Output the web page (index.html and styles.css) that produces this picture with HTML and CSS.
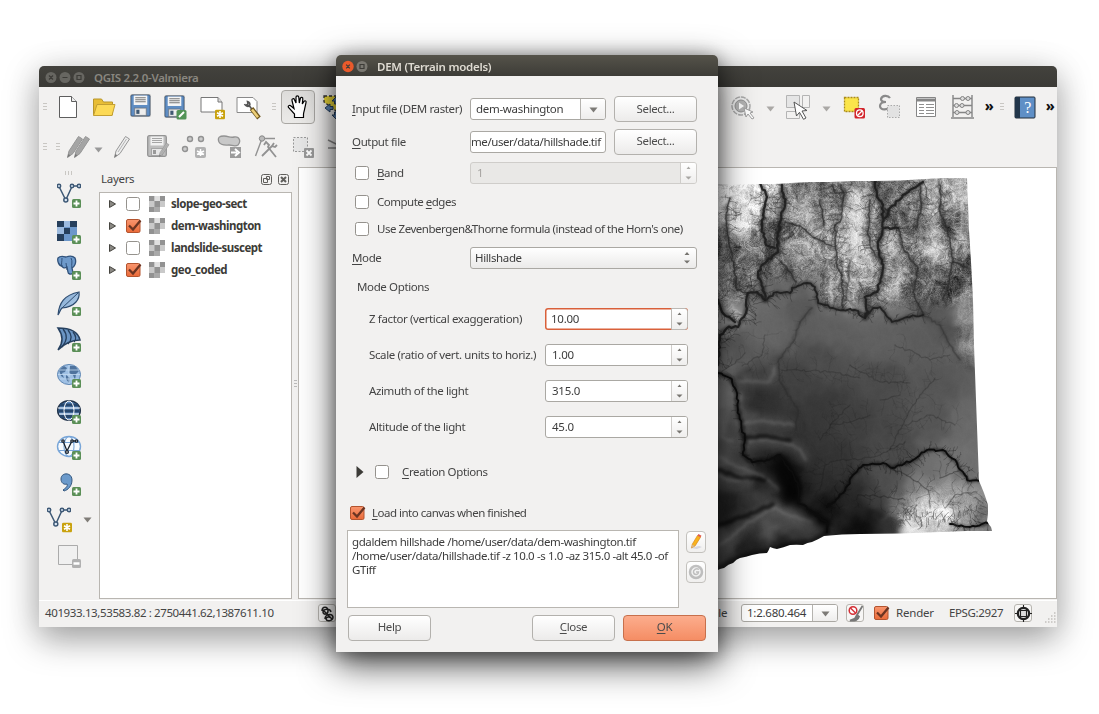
FILE: index.html
```html
<!DOCTYPE html>
<html lang="en">
<head>
<meta charset="utf-8">
<title>QGIS 2.2.0-Valmiera</title>
<link rel="stylesheet" href="styles.css">
</head>
<body>
<svg class="sprite" width="0" height="0">
  <defs>
    <linearGradient id="orange" x1="0" y1="0" x2="0" y2="1"><stop offset="0" stop-color="#f9966f"/><stop offset="1" stop-color="#ea6a38"/></linearGradient>
    <linearGradient id="leaf" x1="0" y1="0" x2="1" y2="1"><stop offset="0" stop-color="#7ea6d0"/><stop offset="1" stop-color="#b9d2ec"/></linearGradient>
    <symbol id="plus" viewBox="0 0 9 9"><rect width="9" height="9" rx="1.5" fill="#5b8f57"/><path d="M4.5 1.5v6M1.5 4.5h6" stroke="#fff" stroke-width="1.8"/></symbol>
    <symbol id="star" viewBox="0 0 10 10"><rect width="10" height="10" rx="1.5" fill="#c9a20f"/><path d="M5 1.5v7M2 3.2l6 3.6M8 3.2L2 6.800" stroke="#fff" stroke-width="1.6"/></symbol>
    <symbol id="check-off" viewBox="0 0 17 16"><rect x="1.500" y="1.500" width="13" height="13" rx="2" fill="#fff" stroke="#95928d"/></symbol>
    <symbol id="check-on" viewBox="0 0 17 16"><rect x="1.500" y="1.500" width="13.500" height="13" rx="1.500" fill="url(#orange)" stroke="#b3542f"/><path d="M4 7.500l4 4L15.500 2.500" fill="none" stroke="#6b3422" stroke-width="2.300"/></symbol>
    <symbol id="down" viewBox="0 0 9 6"><path d="M.5 .5h8L4.500 5.500z" fill="currentColor"/></symbol>
    <symbol id="raster" viewBox="0 0 16 16"><path fill="#c9c9c9" d="M0 0h16v16H0z"/><path fill="#929292" d="M0 0h5.500v5H0zM11 0h5v5h-5zM5.500 5H11v6H5.500zM0 11h5.500v5H0z"/><path fill="#fff" d="M11 11h5v5h-5z"/><path fill="#a9a9a9" d="M5.500 11H11v5H5.500z"/><path fill="#e0e0e0" d="M5.500 0H11v5H5.500z"/></symbol>
    <symbol id="vee" viewBox="0 0 24 20"><g fill="none" stroke="#3d5875" stroke-width="1.500"><path d="M2.500 4.500L8 15.500M9.500 15.500L14.500 4.500M17 3h4"/><circle cx="2" cy="3" r="1.700" fill="#dce8f5"/><circle cx="8.800" cy="17" r="2" fill="#dce8f5"/><circle cx="15" cy="3" r="1.700" fill="#dce8f5"/><circle cx="22" cy="3" r="1.700" fill="#dce8f5"/></g></symbol>
    <symbol id="floppy" viewBox="0 0 20 22"><rect x=".7" y=".7" width="18.600" height="20.600" rx="1.500" fill="currentColor" stroke="#00000055" stroke-width="1.300"/><rect x="3.500" y="1.500" width="13" height="9" fill="#f5f5f5"/><path d="M5 3.500h10M5 5.500h10M5 7.500h10" stroke="#777"/><rect x="4.500" y="13.500" width="11" height="7" fill="#eee" stroke="#6669"/><rect x="6" y="15" width="3" height="4" fill="#3f5872"/></symbol>
    <symbol id="floppy-off" viewBox="0 0 20 22"><rect x=".7" y=".7" width="18.600" height="20.600" rx="1.500" fill="#bdbdbd" stroke="#949494" stroke-width="1.300"/><rect x="3.500" y="1.500" width="13" height="9" fill="#f0f0f0"/><path d="M5 3.500h10M5 5.500h10M5 7.500h10" stroke="#a5a5a5"/><rect x="4.500" y="13.500" width="11" height="7" fill="#e6e6e6" stroke="#a5a5a5"/><rect x="6" y="15" width="3" height="4" fill="#999"/></symbol>
    <symbol id="pencil" viewBox="0 0 18 24"><path d="M1.500 22.500l1.500-6.500L12.500 1.500l4 2.500L7 18.500z" fill="currentColor" stroke="#969696"/><path d="M1.500 22.500l.8-3.500 2 1.300z" fill="#777"/><path d="M13.500 4L5 17" fill="none" stroke="#a3a3a3" stroke-width=".8"/></symbol>
  </defs>
</svg>

<main class="desktop">
<section class="window main-window">
  <header class="titlebar inactive">
    <svg width="42" height="13"><g fill="#676661"><circle cx="6" cy="6.500" r="5.500"/><circle cx="20" cy="6.500" r="5.500"/><circle cx="34" cy="6.500" r="5.500"/></g><path d="M4 4.500l4 4M8 4.500l-4 4M17.500 6.500h5M32 4.500h4v4h-4z" fill="none" stroke="#3d3c38" stroke-width="1.200"/></svg>
    <span class="title">QGIS 2.2.0-Valmiera</span>
  </header>

  <nav class="toolbar top">
    <i class="grip"></i>
    <b class="cell"><svg width="20" height="24"><path d="M1.500 1.500h12l5 5v16h-17z" fill="#fff" stroke="#5e5e5e"/><path d="M13.500 1.500v5h5" fill="#eee" stroke="#5e5e5e"/></svg></b>
    <b class="cell"><svg width="24" height="22"><path d="M1.500 19V3h8l2 3h9v13z" fill="#e8bd35" stroke="#b8962c"/><path d="M1.500 19.500L5 8.500h18L20 19.500z" fill="#fcd955" stroke="#c39f32"/></svg></b>
    <b class="cell blue up"><svg width="21" height="23"><use href="#floppy"/></svg></b>
    <b class="cell blue"><svg width="24" height="25"><use href="#floppy" width="21" height="23"/><rect x="12.500" y="15" width="10" height="9.500" rx="1.500" fill="#539457"/><path d="M15 22l5-5" stroke="#fff" stroke-width="2"/></svg></b>
    <b class="cell"><svg width="26" height="25"><path d="M2 2.500h17l4 4.500v10H2z" fill="#fff" stroke="#777"/><path d="M19 2.500v4.500h4" fill="#ddd" stroke="#777"/><use href="#star" x="16" y="14.500" width="10" height="10"/></svg></b>
    <b class="cell"><svg width="26" height="25"><path d="M2 2.500h16l4 4v11H2z" fill="#fff" stroke="#8a8a8a"/><path d="M9.500 9c1 2 3 3 5 2l3 4M14.500 11c1-2 0-4-2-4.500l.5 2.500-1.500 1z" fill="none" stroke="#555" stroke-width="1.600"/><path d="M16.500 13.500l7.500 9.500" stroke="#6d551c" stroke-width="4.500"/><path d="M17 14.500l6 7.700" stroke="#edcf78" stroke-width="2.600"/></svg></b>
    <i class="grip wide"></i>
    <b class="cell"><span class="pressed"><svg width="22" height="26"><path d="M7.500 23.500v-3.500L1.500 13.500c-1-1.500 1-3 2.500-1.500l3 2.500L5 6.500c-.5-2 2-2.500 2.500-.8L9 9V3.300c0-2 2.600-2 2.800 0l.5 5.700 1-4.500c.5-1.800 2.800-1.200 2.500.6L15.300 10l1.700-2.600c1-1.300 2.600-.4 2 1.200l-1.300 5.900c-.2 2-1.200 4-1.200 6v3z" fill="#fff" stroke="#000" stroke-width="1.200"/></svg></span></b>
    <b class="cell pan"><svg width="26" height="26"><path d="M1 2h24v12l-8 6L1 8z" fill="#f0dc3a" stroke="#333" stroke-width="1.300" stroke-dasharray="3 2"/><path d="M13 3l4 4h-2.500v3h-3V7H9zM13 25l-4-4h2.500v-3h3v3H17zM2 14l5-4v2.500h3v3H7V18zM24 14l-5-4v2.500h-3v3h3V18z" fill="#5c86b7" stroke="#26405f"/></svg></b>
    <span class="spacer"></span>
    <b class="cell"><svg width="26" height="26"><circle cx="12" cy="12" r="9" fill="#eee" stroke="#aaa" stroke-width="1.500" stroke-dasharray="5 1"/><circle cx="12" cy="12" r="6" fill="#b4b4b4" stroke="#909090"/><path d="M10 8.500l5 3.500-5 3.500z" fill="#fff"/><path d="M15 14l9 4-3 1 4 5-2 1-4-5-2 3z" fill="#fff" stroke="#a0a0a0"/></svg></b>
    <b class="drop"><svg width="9" height="6"><use href="#down"/></svg></b>
    <b class="cell"><svg width="26" height="26"><g fill="#e5e5e5" stroke="#b4b4b4"><path d="M1.500 1.500h13v12h-13z"/><path fill="#f2f1f0" d="M17.500 1.500h7v12h-7zM1.500 17.500h13v7h-13z"/></g><path d="M9 8l13 8.500-5 .5 4 7-2.500 1.300-4-7L11.500 22z" fill="#fff" stroke="#555"/></svg></b>
    <b class="drop"><svg width="9" height="6"><use href="#down"/></svg></b>
    <b class="cell"><svg width="24" height="24"><path d="M2.500 2.500h14v14h-14z" fill="#fbe54a" stroke="#ab8c18" stroke-width="1.300" stroke-dasharray="2 1"/><rect x="12.500" y="13" width="10.500" height="10.500" rx="1.500" fill="#d2232a"/><circle cx="17.800" cy="18.200" r="3.300" fill="none" stroke="#fff" stroke-width="1.300"/><path d="M15.500 20.500l4.500-4.500" stroke="#fff" stroke-width="1.300"/></svg></b>
    <b class="cell"><svg width="24" height="26"><path d="M12 4c-2-3-8-3-9 1 0 2 2 3 5 3-4 0-6 2-6 4 0 5 9 4 10 0" fill="none" stroke="#8a8a8a" stroke-width="2.200"/><path d="M9.500 11.500h12v12h-12z" fill="#e2e2e2" stroke="#aaa" stroke-dasharray="1.500 1.500"/></svg></b>
    <b class="cell"><svg width="22" height="22"><path d="M1.500 1.500h19v19h-19z" fill="#fff" stroke="#858585"/><path d="M2 4h18" stroke="#858585" stroke-width="3"/><path d="M4 8.500h5M4 11.500h5M4 14.500h5M4 17.500h5M11 8.500h8M11 11.500h8M11 14.500h8M11 17.500h8" stroke="#8f8f8f"/></svg></b>
    <b class="cell"><svg width="25" height="26"><path d="M3 1v22M22 1v22M3 4.500h19M3 11.500h19M3 18.500h19M1 24h23" fill="none" stroke="#858585" stroke-width="1.400"/><g fill="#ddd" stroke="#858585"><circle cx="12.500" cy="4.500" r="2"/><circle cx="18" cy="4.500" r="2"/><circle cx="6.500" cy="11.500" r="2"/><circle cx="12" cy="11.500" r="2"/><circle cx="7" cy="18.500" r="2"/><circle cx="18" cy="18.500" r="2"/></g></svg></b>
    <b class="more">»</b>
    <i class="grip narrow"></i>
    <b class="cell"><svg width="22" height="23"><rect x="1" y="1" width="20" height="21" rx="1" fill="#5f8fc6" stroke="#222c38"/><path d="M1 1h5v21H1z" fill="#22364a"/><text x="13.500" y="17" text-anchor="middle" class="help-mark">?</text></svg></b>
    <b class="more">»</b>
  </nav>

  <nav class="toolbar second">
    <i class="grip"></i><i class="grip mid"></i>
    <b class="cell pens"><svg width="26" height="26"><g color="#a5a5a5"><use href="#pencil" x="0" y="1" width="18" height="24"/><use href="#pencil" x="7" y="1" width="18" height="24"/></g></svg></b>
    <b class="drop small"><svg width="9" height="6"><use href="#down"/></svg></b>
    <b class="cell light"><svg width="18" height="24"><use href="#pencil"/></svg></b>
    <b class="cell mid-grey"><svg width="24" height="24"><use href="#floppy-off" x="1" y="0" width="20" height="22"/><use href="#pencil" x="12" y="7" width="12" height="16"/></svg></b>
    <b class="cell"><svg width="26" height="26"><g fill="#ccc" stroke="#929292" stroke-width="1.400"><circle cx="9" cy="5" r="2.500"/><circle cx="20" cy="5" r="2.500"/><circle cx="4" cy="15" r="2.500"/></g><rect x="14" y="13" width="11" height="11" rx="2" fill="#b2b2b2"/><path d="M19.500 15v7M16 17l7 3.500M23 17l-7 3.500" stroke="#fff" stroke-width="1.500"/></svg></b>
    <b class="cell"><svg width="26" height="26"><path d="M2 8c-2-5 1-6 5-6 5 0 6 2 10 1 6-1 7 5 4 8-3 2-6 0-9 0s-8 1-10-3z" fill="#c8c8c8" stroke="#929292" stroke-width="1.300"/><rect x="13" y="13" width="11" height="11" fill="#9c9c9c"/><path d="M14 18.500h6M18 15l4 3.500-4 3.500" fill="none" stroke="#fff" stroke-width="2"/></svg></b>
    <b class="cell"><svg width="26" height="26"><path d="M2.500 22L8.500 6M9 4.500h13" fill="none" stroke="#929292" stroke-width="1.400"/><path d="M9 22L20 11M11 11l2-3 3 3-1 2 8 10M21 9l-2 3 3 1 2-2" fill="none" stroke="#929292" stroke-width="1.800"/><circle cx="9" cy="4.500" r="2.700" fill="#bbb" stroke="#888"/></svg></b>
    <b class="cell"><svg width="25" height="26"><path d="M3.500 3.500h14v14h-14z" fill="#e6e6e6" stroke="#999" stroke-dasharray="2 1.500"/><rect x="14" y="14" width="10" height="10" rx="1" fill="#999"/><path d="M16.500 16.500l5 5M21.500 16.500l-5 5" stroke="#fff" stroke-width="1.800"/></svg></b>
    <b class="cell"><svg width="24" height="18"><path d="M2 2l10 5 10-5M2 10h8" fill="none" stroke="#888" stroke-width="1.500"/></svg></b>
  </nav>

  <div class="body">
    <nav class="side">
      <i class="grip-h"></i>
      <b class="cell"><svg width="26" height="26"><use href="#vee" x="1" y="0" width="24" height="20"/><use href="#plus" x="16" y="16" width="9" height="9"/></svg></b>
      <b class="cell"><svg width="26" height="26"><path fill="#6c97ca" d="M1 2h20v20H1z"/><path fill="#263f5c" d="M1 2h7v6H1zM14 2h7v6h-7zM8 9h6v6H8zM1 15h7v7H1z"/><path fill="#9dbbdf" d="M8 2h6v6H8zM1 8h7v7H1z"/><use href="#plus" x="16" y="16" width="9" height="9"/></svg></b>
      <b class="cell"><svg width="26" height="26"><path d="M2 3c3-3 7-1 8-1 3-1 7-1 9 1 2 5-1 9-3 10l1 5c-2 2-5 1-5-1l-1-5c-3 2-5 0-5-1-3 0-5-5-4-8z" fill="#6e9acb" stroke="#31527b" stroke-width="1.300"/><path d="M6 3c0 4-1 6 0 9M15 3c2 4 0 6 1 10M10 8l1 7" fill="none" stroke="#31527b"/><use href="#plus" x="16" y="16" width="9" height="9"/></svg></b>
      <b class="cell"><svg width="26" height="26"><path d="M2 24C3 12 8 4 23 1c1 7-4 15-17 16-2 2-2 4-4 7z" fill="url(#leaf)" stroke="#2e4c70" stroke-width="1.200"/><path d="M5 18L22 2" stroke="#2e4c70"/><use href="#plus" x="16" y="16" width="9" height="9"/></svg></b>
      <b class="cell"><svg width="26" height="26"><path d="M2 1c10 0 20 3 22 12-8 0-16 4-22 10 6-8 5-15 0-22z" fill="#6b95c4" stroke="#26405f" stroke-width="1.500"/><path d="M7 2c5 6 4 12-1 18M12 3c5 6 3 11 0 14M17 5c4 5 3 8 1 10" fill="none" stroke="#26405f" stroke-width="1.300"/><use href="#plus" x="16" y="16" width="9" height="9"/></svg></b>
      <b class="cell"><svg width="26" height="26"><ellipse cx="13" cy="11.500" rx="11.500" ry="10" fill="#9fc0e4" stroke="#5e86b3"/><path d="M3 7l5-4 3 2-2 4-3 1 2 5-3-2zM14 3l5 0 4 5-3 3-1 6-2-5-4-2zM10 12l4 3-1 5-3-4z" fill="#4f739d"/><path d="M2 11.500h22M13 2v19M3 7h20M4 16h18" stroke="#c4daf0" stroke-width=".8"/><use href="#plus" x="16" y="16" width="9" height="9"/></svg></b>
      <b class="cell"><svg width="26" height="26"><ellipse cx="13" cy="11.500" rx="11.300" ry="9.800" fill="#5c8ac0" stroke="#23344b" stroke-width="1.500"/><path d="M4 6h18M2.500 12h21M4 17.500h18" stroke="#25466d" stroke-width="3"/><ellipse cx="13" cy="11.500" rx="5" ry="9.500" fill="none" stroke="#fff"/><path d="M2 9h22M3 15h20" stroke="#fff"/><use href="#plus" x="16" y="16" width="9" height="9"/></svg></b>
      <b class="cell"><svg width="26" height="26"><g fill="none" stroke="#79a6d8" stroke-width="1.100"><ellipse cx="13" cy="11.500" rx="11.500" ry="10" fill="#f7fafd" stroke-width="1.400"/><ellipse cx="13" cy="11.500" rx="5" ry="10"/><path d="M3 7.500h20M3 15.500h20"/></g><g fill="#fff" stroke="#17202c" stroke-width="1.300"><path fill="none" d="M7 6l4 10 5-10h5"/><circle cx="7" cy="6" r="1.200"/><circle cx="11" cy="17" r="1.400"/><circle cx="16" cy="6" r="1.200"/><circle cx="20.500" cy="6" r="1.200"/></g><use href="#plus" x="16" y="16" width="9" height="9"/></svg></b>
      <b class="cell"><svg width="26" height="26"><path d="M5 8c0-7 11-7 11 1 0 6-4 10-8 11l-1-1c3-2 5-4 4-6-3 1-6-1-6-5z" fill="#6b9acb" stroke="#35587f"/><use href="#plus" x="16" y="16" width="9" height="9"/></svg></b>
      <b class="cell with-drop"><svg width="26" height="26"><use href="#vee" x="1" y="0" width="24" height="20"/><use href="#star" x="16" y="15.500" width="10" height="10"/></svg><svg class="dark" width="9" height="6"><use href="#down"/></svg></b>
      <b class="cell"><svg width="26" height="26"><path d="M2.500 2.500h19v19h-19z" fill="#f0f0f0" stroke="#ababab"/><rect x="16" y="16" width="9" height="9" rx="1.500" fill="#b1b1b1"/><path d="M17.500 20.500h6" stroke="#fff" stroke-width="2.500"/></svg></b>
    </nav>

    <aside class="layers">
      <div class="panel-head"><span>Layers</span>
        <svg width="29" height="13"><g fill="none" stroke="#605f5c"><rect x="1.500" y="1.500" width="10" height="10" rx="2"/><path d="M6.500 3.500h3v3h-3zM3.500 5.500h4v4h-4z"/><rect x="18.500" y="1.500" width="10" height="10" rx="2"/><path d="M21 4l5 5M26 4l-5 5" stroke-width="2"/></g></svg>
      </div>
      <ul class="tree">
        <li><svg class="tri" width="7" height="8"><path d="M.5 .5v7L6.500 4z"/></svg><svg width="17" height="16"><use href="#check-off"/></svg><svg class="ras" width="16" height="16"><use href="#raster"/></svg><span>slope-geo-sect</span></li>
        <li><svg class="tri" width="7" height="8"><path d="M.5 .5v7L6.500 4z"/></svg><svg width="17" height="16"><use href="#check-on"/></svg><svg class="ras" width="16" height="16"><use href="#raster"/></svg><span>dem-washington</span></li>
        <li><svg class="tri" width="7" height="8"><path d="M.5 .5v7L6.500 4z"/></svg><svg width="17" height="16"><use href="#check-off"/></svg><svg class="ras" width="16" height="16"><use href="#raster"/></svg><span>landslide-suscept</span></li>
        <li><svg class="tri" width="7" height="8"><path d="M.5 .5v7L6.500 4z"/></svg><svg width="17" height="16"><use href="#check-on"/></svg><svg class="ras" width="16" height="16"><use href="#raster"/></svg><span>geo_coded</span></li>
      </ul>
    </aside>
    <div class="splitter"></div>
    <div class="map"><canvas id="terrain" width="280" height="400"></canvas></div>
  </div>

  <footer class="status">
    <span class="coords">401933.13,53583.82 : 2750441.62,1387611.10</span>
    <b class="mini"><svg width="17" height="17"><path d="M3 6c0-5 6-5 6 0 0 4-5 4-5 1 0-3 7-4 8 0M6 14c0-5 7-6 8-2 0 4-6 5-7 2 0-2 4-3 4-1M3 4l10 10" fill="none" stroke="#222" stroke-width="1.500"/></svg></b>
    <span class="scale-label">Scale</span>
    <span class="combo scale"><span>1:2.680.464</span><i><svg width="9" height="6"><use href="#down"/></svg></i></span>
    <b class="mini brush"><svg width="17" height="17"><path d="M15.500 1L10 10M10 10l-2 3.500-5 2c4 0 8 .5 9-4z" fill="#777" stroke="#777" stroke-width="1.800"/><circle cx="6" cy="5.500" r="3.800" fill="#fff" stroke="#d42f36" stroke-width="1.500"/><path d="M3.500 3l5 5" stroke="#d42f36" stroke-width="1.400"/></svg></b>
    <svg class="render" width="17" height="16"><use href="#check-on"/></svg>
    <span class="render-label">Render</span>
    <span class="epsg">EPSG:2927</span>
    <b class="mini"><svg width="17" height="17"><circle cx="8.500" cy="8.500" r="5.700" fill="#ddd" stroke="#222" stroke-width="2.200"/><path d="M5.500 3v11M11.500 3v11M3 5.500h11M3 11.500h11M8.500 0v4M8.500 13v4M0 8.500h4M13 8.500h4" fill="none" stroke="#222" stroke-width="1.100"/></svg></b>
    <svg class="resize" width="12" height="12"><path d="M9 1h2M6 4h5M3 7h8M0 10h11" stroke="#c2c0bc" stroke-width="1.500" stroke-dasharray="1.500 1.500"/></svg>
  </footer>
</section>

<section class="window dialog">
  <header class="titlebar">
    <svg width="28" height="13"><circle cx="6" cy="6.500" r="5.700" fill="#ea5a2b"/><circle cx="20" cy="6.500" r="5.500" fill="#7a7871"/><path d="M4.200 4.700l3.600 3.600M7.800 4.700L4.200 8.300M18 4.500h4v4h-4z" fill="none" stroke="#3d3c38" stroke-width="1.200"/></svg>
    <span class="title">DEM (Terrain models)</span>
  </header>
  <div class="form">
    <div class="row r1"><label class="l1"><u>I</u>nput file (DEM raster)</label><span class="combo"><span class="t-in">dem-washington</span><i><svg width="9" height="6"><use href="#down"/></svg></i></span><button>Select...</button></div>
    <div class="row r2"><label class="l1"><u>O</u>utput file</label><span class="field clip"><span>me/user/data/hillshade.tif</span></span><button>Select...</button></div>
    <div class="row r3"><svg width="17" height="16"><use href="#check-off"/></svg><label class="band"><u>B</u>and</label><span class="spin wide off"><span>1</span><i><svg width="7" height="14"><path d="M1.500 3L3.500 .5l2 2.500zM.5 10.500h6l-3 3z"/></svg></i></span></div>
    <div class="row r4"><svg width="17" height="16"><use href="#check-off"/></svg><label class="edges">Compute <u>e</u>dges</label></div>
    <div class="row r5"><svg width="17" height="16"><use href="#check-off"/></svg><label class="zeven">Use Zevenbergen&amp;Thorne formula (instead of the Horn's one)</label></div>
    <div class="row r6"><label class="l1"><u>M</u>ode</label><span class="select"><span>Hillshade</span><svg width="8" height="14"><path d="M1.500 4L4 1l2.500 3zM1 9.500h6L4 12.500z"/></svg></span></div>
    <div class="row r7"><label class="options">Mode Options</label></div>
    <div class="row param"><label>Z factor (vertical exaggeration)</label><span class="spin focus"><span>10.00</span><i><svg width="7" height="14"><path d="M1.500 3L3.500 .5l2 2.500zM.5 10.500h6l-3 3z"/></svg></i></span></div>
    <div class="row param"><label>Scale (ratio of vert. units to horiz.)</label><span class="spin"><span>1.00</span><i><svg width="7" height="14"><path d="M1.500 3L3.500 .5l2 2.500zM.5 10.500h6l-3 3z"/></svg></i></span></div>
    <div class="row param"><label>Azimuth of the light</label><span class="spin"><span>315.0</span><i><svg width="7" height="14"><path d="M1.500 3L3.500 .5l2 2.500zM.5 10.500h6l-3 3z"/></svg></i></span></div>
    <div class="row param"><label>Altitude of the light</label><span class="spin"><span>45.0</span><i><svg width="7" height="14"><path d="M1.500 3L3.500 .5l2 2.500zM.5 10.500h6l-3 3z"/></svg></i></span></div>
    <div class="row r12"><svg width="8" height="12"><path d="M.5 0v12L7.500 6z" fill="#3c3b37"/></svg><svg class="cbox" width="17" height="16"><use href="#check-off"/></svg><label><u>C</u>reation Options</label></div>
    <div class="row r13"><svg width="17" height="16"><use href="#check-on"/></svg><label><u>L</u>oad into canvas when finished</label></div>
    <div class="command">
      <div class="console"><p>gdaldem hillshade /home/user/data/dem-washington.tif</p><p>/home/user/data/hillshade.tif -z 10.0 -s 1.0 -az 315.0 -alt 45.0 -of</p><p>GTiff</p></div>
      <div class="tools">
        <b><svg width="16" height="18"><path d="M2 15l9-2 3 1-5 2z" fill="#d6d6e0"/><path d="M3.500 15l.8-3.800L9.500 2.500l3 1.700-5.300 8.600z" fill="#f8b21d" stroke="#d9861a" stroke-width=".7"/><path d="M9.500 2.500l1-1.500 3 1.700-1 1.500z" fill="#e0584c"/><path d="M3.500 15l.8-3.600 2.600 1.500z" fill="#d8b78a"/></svg></b>
        <b class="off"><svg width="16" height="18"><circle cx="8" cy="9" r="6" fill="#f2f2f2" stroke="#999" stroke-width="2.500"/><path d="M11 6.500C8 4.500 5 7 5.500 9.500 6 12 10 12.500 10.500 9H8" fill="none" stroke="#999" stroke-width="1.500"/></svg></b>
      </div>
    </div>
    <div class="buttons"><button>Help</button><span class="spacer"></span><button><u>C</u>lose</button><button class="ok"><u>O</u>K</button></div>
  </div>
</section>
</main>
<script src="terrain.js"></script>
</body>
</html>
```
FILE: styles.css
```css
* { box-sizing: border-box; }
body { margin: 0; background: #fff; overflow: hidden; font: 11.5px/14px "Noto Sans", "Open Sans", sans-serif; color: #444; letter-spacing: -0.37px; }
b, i { font-weight: normal; font-style: normal; }
svg { display: block; flex: none; }
u { text-decoration-thickness: 1px; text-underline-offset: 2px; }
.sprite { position: absolute; }
.desktop { position: relative; width: 1099px; height: 714px; overflow: hidden; }
.window { position: absolute; display: flex; flex-direction: column; background: #f2f1f0; white-space: nowrap; }
.main-window { left: 39px; top: 66px; width: 1018px; height: 561px; border-radius: 5px 5px 0 0; box-shadow: 0 12px 34px rgba(0,0,0,.36), 0 2px 36px rgba(0,0,0,.08); }
.dialog { left: 336px; top: 55px; width: 382px; height: 597px; border-radius: 5px 5px 0 0; box-shadow: 0 12px 36px rgba(0,0,0,.72), 0 2px 18px rgba(0,0,0,.32); }
.titlebar { display: flex; align-items: center; height: 21px; flex: none; padding: 2px 0 0 6px; gap: 7px; border-radius: 5px 5px 0 0; background: linear-gradient(#55534a, #3d3c37); color: #dfdbd2; }
.titlebar.inactive { background: linear-gradient(#43423d, #3b3a36); color: #8a8780; }
.title { font-weight: 600; letter-spacing: -.3px; }
.dialog .title { letter-spacing: -.26px; }

.toolbar { display: flex; align-items: center; height: 40px; flex: none; }
.cell { flex: 0 0 36px; height: 36px; display: flex; align-items: center; justify-content: center; }
.cell.blue { color: #5f8dc3; }
.cell.up { padding-bottom: 3px; }
.cell.light { color: #ededed; }
.cell.mid-grey { color: #b5b5b5; }
.cell.pens { flex-basis: 30px; }
.cell.pan { padding-left: 4px; }
.grip { flex: 0 0 11px; height: 8px; background: repeating-linear-gradient(#c9c7c3 0 1px, transparent 1px 3px) 4px 0 / 4px 8px no-repeat; }
.grip.wide { flex-basis: 14px; background-position-x: 6px; }
.grip.mid { flex-basis: 14px; background-position-x: 6px; }
.grip.narrow { flex-basis: 9px; background-position-x: 2px; }
.pressed { width: 34px; height: 34px; border: 1px solid #a9a7a3; border-radius: 4px; background: linear-gradient(#dddcda, #ebeae8); display: flex; align-items: center; justify-content: center; }
.spacer { flex: 1; }
.drop { flex: 0 0 20px; display: flex; justify-content: center; color: #aaa8a5; padding-top: 3px; }
.drop.small { flex-basis: 10px; justify-content: flex-start; padding: 5px 0 0 0; color: #999; }
.more { flex: 0 0 18px; text-align: center; font: 800 14px/20px "Noto Sans", sans-serif; color: #111; padding-bottom: 3px; }
.more:last-child { flex-basis: 14px; }
.help-mark { font: 16px "Liberation Serif", serif; fill: #fff; }

.body { display: flex; flex: 1; min-height: 0; }
.side { width: 60px; display: flex; flex-direction: column; align-items: center; padding-top: 4px; }
.side .cell { width: 36px; }
.side .with-drop { width: 60px; justify-content: flex-start; padding-left: 7px; gap: 11px; }
.dark { color: #807d78; }
.grip-h { width: 8px; height: 4px; margin-bottom: 3px; background: repeating-linear-gradient(90deg, #c9c7c3 0 1px, transparent 1px 3px); }
.layers { width: 193px; display: flex; flex-direction: column; }
.panel-head { height: 25px; display: flex; align-items: center; justify-content: space-between; padding: 0 3px 1px 2px; letter-spacing: -.3px; }
.tree { list-style: none; margin: 0 0 1px; padding: 0 0 0 9px; flex: 1; background: #fff; border: 1px solid #b9b6b1; }
.tree li { display: flex; align-items: center; height: 22px; font-weight: 700; color: #3c3b37; letter-spacing: -.5px; }
.tri { margin-right: 9px; fill: #8b8984; stroke: #45443f; }
.ras { margin: 0 6px 0 7px; }
.splitter { width: 6px; background: repeating-linear-gradient(#bbb 0 1px, transparent 1px 3px) 2px 213px / 3px 7px no-repeat; }
.map { flex: 1; margin-bottom: 1px; background: #fff; border: 1px solid #b9b6b1; padding: 4px 0 0 417px; }
#terrain { display: block; }

.status { display: flex; align-items: center; height: 27px; flex: none; border-top: 1px solid #fff; padding: 0 0 2px 6px; }
.coords { width: 273px; letter-spacing: -.38px; padding-bottom: 1px; }
.mini { width: 18px; height: 18px; border: 1px solid #b7b5b0; border-radius: 3px; display: flex; align-items: center; justify-content: center; background: #f7f6f5; flex: none; }
.scale-label { width: 66px; margin-left: 325px; text-align: right; }
.scale { margin-left: 14px; }
.brush { margin-left: 8px; }
.render { margin: 0 6px 0 9px; }
.render-label { width: 53px; padding-bottom: 1px; letter-spacing: -.2px; }
.epsg { width: 65px; }
.resize { margin: 10px 0 0 auto; }

.combo, .field, .select, .spin { display: flex; align-items: center; background: #fff; border: 1px solid #aaa8a3; border-radius: 3px; color: #3c3c3c; flex: none; overflow: hidden; }
.combo { width: 136px; height: 22px; }
.combo > span { flex: 1; padding-left: 5px; }
.t-in { letter-spacing: -.3px; }
.combo i { width: 25px; height: 100%; display: flex; align-items: center; justify-content: center; border-left: 1px solid #b5b3af; background: linear-gradient(#fff, #eeedec); color: #7c7a76; padding-top: 2px; }
.combo.scale { width: 97px; height: 18px; letter-spacing: -.25px; }
.form { flex: 1; padding: 17px 11px 12px; display: flex; flex-direction: column; }
.row { display: flex; align-items: center; flex: none; }
.l1 { width: 118px; margin-left: 5px; }
.r1 { height: 32px; } .r2 { height: 33px; } .r3 { height: 30px; } .r4 { height: 28px; } .r5 { height: 26px; } .r6 { height: 32px; }
.r7 { height: 27px; padding: 0 0 2px 10px; } .param { height: 36px; padding-left: 22px; } .r12 { height: 54px; padding-left: 9px; } .r13 { height: 28px; padding-left: 2px; }
.r3, .r4, .r5 { padding-left: 7px; gap: 6px; }
button { font: inherit; letter-spacing: inherit; color: #4c4c4c; width: 83px; height: 26px; padding: 0 0 1px; border: 1px solid #b3b1ad; border-radius: 4px; background: linear-gradient(#fff, #ecebea); flex: none; }
.row button { margin-left: 8px; }
.field { width: 136px; height: 22px; }
.clip { letter-spacing: -.43px; }
.band { width: 87px; }
.edges { letter-spacing: -.5px; }
.zeven { letter-spacing: -.465px; }
.spin { width: 143px; height: 22px; }
.spin span { flex: 1; padding-left: 6px; letter-spacing: -.25px; }
.spin i { width: 16px; height: 100%; display: flex; align-items: center; justify-content: center; border-left: 1px solid #cfcdca; background: linear-gradient(#fff, #efeeed); }
.spin i svg, .select svg { fill: #777570; }
.spin.wide { width: 227px; }
.spin.off { background: #e9e8e6; border-color: #cfcdca; color: #a5a3a0; }
.off svg { opacity: .6; }
.focus { border: 0; box-shadow: inset 0 0 0 1.5px #d9603a; }
.focus i { border: 1px solid #bbb9b5; border-radius: 0 3px 3px 0; width: 17px; }
.select { width: 227px; height: 22px; justify-content: space-between; padding: 0 5px 0 4px; background: linear-gradient(#fff, #ebeae9); }
.param label { width: 176px; }
.cbox { margin: 0 11px 0 10px; }
.r13 svg { margin-right: 6px; }
.r13 label { letter-spacing: -.5px; }
.command { display: flex; gap: 7px; margin-top: 3px; }
.console { width: 332px; height: 78px; background: #fff; border: 1px solid #b9b6b1; padding: 4px; color: #3c3c3c; letter-spacing: -.4px; }
.console p { margin: 0; }
.tools { display: flex; flex-direction: column; gap: 8px; padding-top: 1px; }
.tools b { width: 20px; height: 22px; border: 1px solid #c3c1bd; border-radius: 4px; background: linear-gradient(#fff, #f0efee); display: flex; align-items: center; justify-content: center; }
.buttons { display: flex; gap: 8px; margin-top: 7px; padding: 0 1px; }
.buttons button { padding-bottom: 2px; }
.buttons .spacer { margin-right: -8px; }
.buttons .ok { background: linear-gradient(#fcad8d, #f58d64); border-color: #c7704c; }
```
FILE: terrain.js
```js
// Draws the elevation raster. Coordinates are in desktop space, offset by OX/OY.
(function () {
  var OX = 716, OY = 172, W = 280, H = 400;
  var cv = document.getElementById('terrain'), c = cv.getContext('2d');
  var seed = 7;
  function rnd() { seed = (seed * 16807) % 2147483647; return seed / 2147483647; }

  // Elevation samples: x, y, grey level
  var A = [725,190,252,740,220,232,750,190,236,732,205,245,745,260,120,725,310,150,724,245,110,770,235,85,755,240,150,800,205,150,820,210,155,805,250,160,830,190,120,855,210,195,860,240,195,853,270,185,835,285,125,790,270,120,776,280,105,780,288,100,890,190,110,900,215,120,890,245,155,895,275,150,870,235,130,915,225,105,910,205,145,932,200,165,935,245,185,925,275,105,960,190,185,962,240,150,950,225,85,965,275,95,940,300,82,968,310,150,972,345,140,950,330,80,
    765,330,102,740,350,88,725,365,115,800,305,88,830,330,94,880,340,95,920,340,92,960,365,90,820,360,76,880,380,74,940,380,84,970,420,105,930,420,85,890,430,70,850,420,62,820,410,55,800,380,64,760,400,45,790,430,48,750,385,50,724,395,120,723,420,110,735,430,65,722,460,85,770,430,52,780,475,22,790,490,14,765,475,22,745,478,60,735,470,50,730,510,30,760,505,60,745,520,45,770,530,85,790,520,70,720,545,65,750,550,30,780,544,28,815,525,60,825,510,15,835,460,52,820,480,42,850,500,38,870,515,22,860,530,10,890,480,78,880,500,60,900,510,120,912,525,230,930,508,205,945,515,235,925,485,125,950,490,150,970,500,150,980,515,110,960,525,140,890,525,45,965,470,108,930,470,110,900,455,72];
  function base(x, y) {
    var s = 0, w = 0;
    for (var i = 0; i < A.length; i += 3) {
      var dx = x - A[i], dy = y - A[i + 1], d = dx * dx + dy * dy + 90, k = 1 / (d * d);
      s += A[i + 2] * k; w += k;
    }
    return s / w;
  }
  function hash(x, y) { var n = Math.sin(x * 127.1 + y * 311.7) * 43758.5453; return n - Math.floor(n); }
  function noise(x, y) {
    var xi = Math.floor(x), yi = Math.floor(y), u = x - xi, v = y - yi;
    u = u * u * (3 - 2 * u); v = v * v * (3 - 2 * v);
    return (hash(xi, yi) * (1 - u) + hash(xi + 1, yi) * u) * (1 - v) + (hash(xi, yi + 1) * (1 - u) + hash(xi + 1, yi + 1) * u) * v;
  }
  function ridge(x, y) {
    var s = 0, a = .5, f = 1;
    for (var i = 0; i < 4; i++) { s += a * (1 - Math.abs(noise(x * f, y * f) * 2 - 1)); a *= .65; f *= 2.1; }
    return s - .72;
  }
  // How mountainous a spot is, 0 to 1
  function rugged(x, y) {
    var edge = x < 765 ? 320 - (x - 718) * .6 : x < 820 ? 286 : 312;
    var m = Math.max(0, Math.min(1, (edge - y) / 18));
    var se = Math.max(0, 1 - Math.hypot((x - 940) / 60, (y - 512) / 38));
    var e = Math.max(0, Math.min(.5, (x - 950) / 30)) * Math.max(0, Math.min(1, (375 - y) / 25));
    return Math.max(m, se * .9, e, .05);
  }
  var img = c.createImageData(W, H);
  for (var j = 0; j < H; j++) for (var i = 0; i < W; i++) {
    var x = i + OX, y = j + OY, wx = noise(x / 9, y / 9) * 8, wy = noise(x / 9 + 40, y / 9) * 8;
    var r = rugged(x, y), south = Math.max(0, Math.min(1, (360 - y) / 60));
    var v = base(x + wx - 4, y + wy - 4) - r * south * 8 + r * (ridge((x + wx) / 9, (y + wy) / 11) * 125 + (hash(x, y) - .5) * 34);
    v = Math.max(4, Math.min(255, v));
    var o = (j * W + i) * 4;
    img.data[o] = img.data[o + 1] = img.data[o + 2] = v; img.data[o + 3] = 255;
  }
  c.putImageData(img, 0, 0);
  c.translate(-OX, -OY);
  c.lineCap = c.lineJoin = 'round';

  function stroke(p, w, col, blur) {
    c.filter = blur ? 'blur(' + blur + 'px)' : 'none';
    c.beginPath(); c.moveTo(p[0], p[1]);
    for (var i = 2; i < p.length; i += 2) {
      var n = Math.max(1, Math.round(Math.hypot(p[i] - p[i - 2], p[i + 1] - p[i - 1]) / 3));
      for (var k = 1; k <= n; k++) {
        var t = k / n, q = k < n ? 2.4 : 0;
        c.lineTo(p[i - 2] + (p[i] - p[i - 2]) * t + (rnd() - .5) * q, p[i - 1] + (p[i + 1] - p[i - 1]) * t + (rnd() - .5) * q);
      }
    }
    c.lineWidth = w; c.strokeStyle = col; c.stroke(); c.filter = 'none';
  }
  // Side streams growing away from a valley
  function twig(x, y, a, len, col, w) {
    var p = [x, y];
    for (var i = 0; i < len; i++) {
      a += (rnd() - .5) * .9; x += Math.cos(a) * 2.2; y += Math.sin(a) * 2.2; p.push(x, y);
      if (rnd() < .3 && len > 3) twig(x, y, a + (rnd() < .5 ? -.9 : .9), Math.floor(len * .45), col, w * .8);
    }
    c.beginPath(); c.moveTo(p[0], p[1]);
    for (i = 2; i < p.length; i += 2) c.lineTo(p[i], p[i + 1]);
    c.lineWidth = w; c.strokeStyle = col; c.stroke();
  }
  function branches(p, step, len, col) {
    for (var i = 2; i < p.length; i += 2) {
      var dx = p[i] - p[i - 2], dy = p[i + 1] - p[i - 1], L = Math.hypot(dx, dy), a = Math.atan2(dy, dx);
      for (var d = 0; d < L; d += step * (.6 + rnd() * .8)) {
        var s = rnd() < .5 ? -1 : 1;
        twig(p[i - 2] + dx * d / L, p[i - 1] + dy * d / L, a + s * (1 + rnd() * .6), Math.round(len * (.4 + rnd() * .7)), col, .9);
      }
    }
  }
  // Lowland folds in the south-west
  [[718,457,735,466,755,473,770,481,778,490],[718,476,732,480,748,479],[747,441,765,440,783,442,800,449,806,460],[720,545,745,525,775,507],[775,508,790,516,812,522],[738,424,760,421,793,425],[721,437,733,441],[739,381,770,382,775,368]]
    .forEach(function (p) { stroke(p, 9, 'rgba(150,150,150,.22)', 4); stroke(p, 2, 'rgba(160,160,160,.3)', 1.5); });
  [[718,526,745,516,773,504],[718,470,738,477,765,480],[744,438,765,436,790,440]].forEach(function (p) { stroke(p, 4, 'rgba(0,0,0,.6)', 1.5); });
  c.filter = 'blur(4px)'; c.fillStyle = 'rgba(0,0,0,.7)';
  c.beginPath(); c.moveTo(770,462); c.lineTo(786,455); c.lineTo(800,480); c.lineTo(800,505); c.lineTo(832,520); c.lineTo(826,532); c.lineTo(785,500); c.closePath(); c.fill(); c.filter = 'none';

  // Snowy crests
  [[743,195,742,215,736,235],[856,190,855,215,852,240,856,262],[853,225,862,248,868,262],[802,205,812,225,808,250],[831,275,832,300],[890,232,889,252],[900,272,893,296],[932,190,934,215,933,250,938,262],[960,190,962,215,960,245],[729,300,738,318],[849,285,848,305],[906,525,911,508,911,532],[935,505,955,522],[925,520,950,510]]
    .forEach(function (p) { stroke(p, 9, 'rgba(255,255,255,.24)', 3.5); branches(p, 2.5, 5, 'rgba(245,245,245,.28)'); stroke(p, 1.2, 'rgba(255,255,255,.4)', .8); });

  // Small mountain streams
  for (var m = 0; m < 420; m++) {
    var sx = 718 + rnd() * 250, sy = 182 + rnd() * 125, white = sx < 755 && sy < 235;
    if (rugged(sx, sy) > .7 && !white) twig(sx, sy, rnd() * 6.28, 4, 'rgba(60,60,60,.3)', .8);
  }

  var minor = [[730,198,727,208,727,228,730,248,735,275,737,290,748,293],[835,225,836,250,837,265,842,275,843,308],[841,185,844,193,835,193,832,185],[844,195,840,222,835,225],[785,222,800,226,815,238,832,246],[940,185,940,212,950,238,953,262,968,268],[898,228,903,248,913,262,918,268,913,292,923,315],[781,262,790,272,796,282],[923,315,940,325,950,345,960,360],[846,300,850,262],[820,200,824,225],[870,200,868,235,875,255],[920,185,921,210,917,228],[812,308,800,322,793,342,778,362,779,380,787,393,798,410,796,430],[953,262,948,285,943,300]];
  minor.forEach(function (p) {
    var north = p[1] < 300;
    branches(p, north ? 4 : 9, north ? 7 : 4, north ? 'rgba(50,50,50,.42)' : 'rgba(30,30,30,.12)');
    stroke(p, 3, north ? 'rgba(45,45,45,.45)' : 'rgba(40,40,40,.3)', 1); stroke(p, 1.4, north ? 'rgba(40,40,40,.6)' : 'rgba(40,40,40,.3)');
  });
  var faint = [[905,442,880,455,862,459,840,460,825,465,820,490],[890,450,910,410,935,378],[905,425,930,415,955,425],[850,365,880,382,910,383],[782,370,830,372,860,378],[830,425,850,422,870,415],[820,440,835,420,850,405],[858,495,890,497,905,500],[890,468,910,477,928,490,930,508],[895,345,930,360,950,355],[765,335,762,355,742,366],[718,373,732,365,745,353],[940,478,960,470],[945,508,955,495,977,492],[917,505,910,520],[900,395,880,400]];
  faint.forEach(function (p) {
    var low = p[1] > 460;
    branches(p, 6, 8, low ? 'rgba(15,15,15,.22)' : 'rgba(15,15,15,.1)'); stroke(p, 1.2, low ? 'rgba(20,20,20,.35)' : 'rgba(20,20,20,.22)', .4);
  });

  var major = [[760,183,767,197,763,215,762,228,766,245,775,248],[782,185,785,202,780,222,777,245,778,252,762,265,758,275,763,288,765,300],[765,300,777,292,790,293,792,288,807,283,815,287,818,303,833,308,843,310,855,310,865,318,873,308,880,307,892,322,907,317,923,315],[765,300,757,292,748,293,745,315,738,327,727,328,720,335,718,365],[875,182,877,197,883,205,883,228,878,245,883,268,877,292,865,297,868,312,865,318],[923,182,910,190,890,208,885,218],[885,228,898,228],[718,300,722,312,735,322]];
  major.forEach(function (p, k) {
    branches(p, 4, k === 2 ? 4 : 7, 'rgba(35,35,35,.4)');
    stroke(p, k === 1 || k === 4 ? 6 : 4, 'rgba(40,40,40,.55)', 1.2); stroke(p, k === 2 ? 1.8 : 2.2, 'rgba(30,30,30,.9)');
  });
  var low = [[718,373,730,378,737,393,738,410,745,440,743,455,752,462,767,460,780,455,788,467,798,483,798,503,810,510,827,522,827,532],[827,507,843,493,853,475,863,465,883,463,892,468,913,460,927,450,943,450,957,463,967,480,979,481],[988,523,970,527,950,524]];
  low.forEach(function (p, k) { branches(p, k ? 3.5 : 12, k ? 5 : 3, 'rgba(10,10,10,.3)'); stroke(p, k ? 3 : 5, 'rgba(5,5,5,.5)', 1); stroke(p, 1.8, '#0c0c0c'); });
  branches([900,520,920,516,945,522,975,512,985,500], 2.5, 5, 'rgba(60,60,60,.5)');
  stroke([718,569,740,558,767,553,790,545,812,542,826,534], 6, 'rgba(0,0,0,.6)', 2);

  // Clip to the raster extent
  var O = [710,184,757,184,790,183,830,182,875,181,925,179,967,178,969,230,971,262,973,300,974,345,976,400,979,481,984,493,988,505,988,514,987,521,991,527,992,531,940,532,860,534,824,536,812,542,803,545,790,545,777,549,770,547,767,553,752,555,740,558,733,563,724,568,716,571];
  c.globalCompositeOperation = 'destination-in';
  c.fillStyle = '#000'; c.beginPath(); c.moveTo(O[0], O[1]);
  for (var n = 2; n < O.length; n += 2) {
    c.lineTo((O[n] + O[n - 2]) / 2, (O[n + 1] + O[n - 1]) / 2 + (rnd() - .5) * 1.5);
    c.lineTo(O[n], O[n + 1]);
  }
  c.closePath(); c.fill();
})();
```
